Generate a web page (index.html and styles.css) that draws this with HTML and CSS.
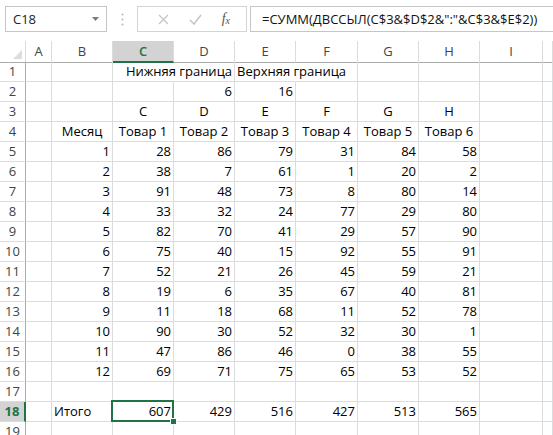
FILE: index.html
```html
<!DOCTYPE html>
<html lang="ru">
<head>
<meta charset="utf-8">
<title>Excel</title>
<link rel="stylesheet" href="styles.css">
</head>
<body>
<div class="fbar">
  <div class="namebox"><span>C18</span><svg class="dd" width="7" height="4" viewBox="0 0 7 4"><path d="M0 0H7L3.5 4Z" fill="#7a7a7a"/></svg></div>
  <div class="sep"><svg width="3" height="13" viewBox="0 0 3 13"><circle cx="1.5" cy="1.5" r="1" fill="#b5b5b5"/><circle cx="1.5" cy="6.5" r="1" fill="#b5b5b5"/><circle cx="1.5" cy="11.5" r="1" fill="#b5b5b5"/></svg></div>
  <div class="btns">
    <svg width="11" height="11" viewBox="0 0 11 11"><path d="M1 1L10 10M10 1L1 10" stroke="#c4c4c4" stroke-width="1.3" fill="none"/></svg>
    <svg width="13" height="11" viewBox="0 0 13 11"><path d="M1 6L5 10L12 1" stroke="#c4c4c4" stroke-width="1.5" fill="none"/></svg>
    <span class="fx">f<sub>x</sub></span>
  </div>
  <div class="formula">=СУММ(ДВССЫЛ(C$3&amp;$D$2&amp;":"&amp;C$3&amp;$E$2))</div>
</div>
<div class="sheet">
  <div class="row hdr"><div class="corner"><svg width="9" height="9" viewBox="0 0 9 9"><path d="M9 0V9H0Z" fill="#dcdcdc"/></svg></div><div class="ch">A</div><div class="ch">B</div><div class="ch sel">C</div><div class="ch">D</div><div class="ch">E</div><div class="ch">F</div><div class="ch">G</div><div class="ch">H</div><div class="ch">I</div><div class="ch"></div></div>
  <div class="row"><div class="rh">1</div><div class="c"></div><div class="c"></div><div class="c nob"></div><div class="c ov"><span>Нижняя граница</span></div><div class="c nob ovl"><span>Верхняя граница</span></div><div class="c"></div><div class="c"></div><div class="c"></div><div class="c"></div><div class="c"></div></div>
  <div class="row"><div class="rh">2</div><div class="c"></div><div class="c"></div><div class="c"></div><div class="c r">6</div><div class="c r">16</div><div class="c"></div><div class="c"></div><div class="c"></div><div class="c"></div><div class="c"></div></div>
  <div class="row"><div class="rh">3</div><div class="c"></div><div class="c"></div><div class="c m">C</div><div class="c m">D</div><div class="c m">E</div><div class="c m">F</div><div class="c m">G</div><div class="c m">H</div><div class="c"></div><div class="c"></div></div>
  <div class="row"><div class="rh">4</div><div class="c"></div><div class="c m">Месяц</div><div class="c m">Товар 1</div><div class="c m">Товар 2</div><div class="c m">Товар 3</div><div class="c m">Товар 4</div><div class="c m">Товар 5</div><div class="c m">Товар 6</div><div class="c"></div><div class="c"></div></div>
  <div class="row"><div class="rh">5</div><div class="c"></div><div class="c r">1</div><div class="c r">28</div><div class="c r">86</div><div class="c r">79</div><div class="c r">31</div><div class="c r">84</div><div class="c r">58</div><div class="c"></div><div class="c"></div></div>
  <div class="row"><div class="rh">6</div><div class="c"></div><div class="c r">2</div><div class="c r">38</div><div class="c r">7</div><div class="c r">61</div><div class="c r">1</div><div class="c r">20</div><div class="c r">2</div><div class="c"></div><div class="c"></div></div>
  <div class="row"><div class="rh">7</div><div class="c"></div><div class="c r">3</div><div class="c r">91</div><div class="c r">48</div><div class="c r">73</div><div class="c r">8</div><div class="c r">80</div><div class="c r">14</div><div class="c"></div><div class="c"></div></div>
  <div class="row"><div class="rh">8</div><div class="c"></div><div class="c r">4</div><div class="c r">33</div><div class="c r">32</div><div class="c r">24</div><div class="c r">77</div><div class="c r">29</div><div class="c r">80</div><div class="c"></div><div class="c"></div></div>
  <div class="row"><div class="rh">9</div><div class="c"></div><div class="c r">5</div><div class="c r">82</div><div class="c r">70</div><div class="c r">41</div><div class="c r">29</div><div class="c r">57</div><div class="c r">90</div><div class="c"></div><div class="c"></div></div>
  <div class="row"><div class="rh">10</div><div class="c"></div><div class="c r">6</div><div class="c r">75</div><div class="c r">40</div><div class="c r">15</div><div class="c r">92</div><div class="c r">55</div><div class="c r">91</div><div class="c"></div><div class="c"></div></div>
  <div class="row"><div class="rh">11</div><div class="c"></div><div class="c r">7</div><div class="c r">52</div><div class="c r">21</div><div class="c r">26</div><div class="c r">45</div><div class="c r">59</div><div class="c r">21</div><div class="c"></div><div class="c"></div></div>
  <div class="row"><div class="rh">12</div><div class="c"></div><div class="c r">8</div><div class="c r">19</div><div class="c r">6</div><div class="c r">35</div><div class="c r">67</div><div class="c r">40</div><div class="c r">81</div><div class="c"></div><div class="c"></div></div>
  <div class="row"><div class="rh">13</div><div class="c"></div><div class="c r">9</div><div class="c r">11</div><div class="c r">18</div><div class="c r">68</div><div class="c r">11</div><div class="c r">52</div><div class="c r">78</div><div class="c"></div><div class="c"></div></div>
  <div class="row"><div class="rh">14</div><div class="c"></div><div class="c r">10</div><div class="c r">90</div><div class="c r">30</div><div class="c r">52</div><div class="c r">32</div><div class="c r">30</div><div class="c r">1</div><div class="c"></div><div class="c"></div></div>
  <div class="row"><div class="rh">15</div><div class="c"></div><div class="c r">11</div><div class="c r">47</div><div class="c r">86</div><div class="c r">46</div><div class="c r">0</div><div class="c r">38</div><div class="c r">55</div><div class="c"></div><div class="c"></div></div>
  <div class="row"><div class="rh">16</div><div class="c"></div><div class="c r">12</div><div class="c r">69</div><div class="c r">71</div><div class="c r">75</div><div class="c r">65</div><div class="c r">53</div><div class="c r">52</div><div class="c"></div><div class="c"></div></div>
  <div class="row"><div class="rh">17</div><div class="c"></div><div class="c"></div><div class="c"></div><div class="c"></div><div class="c"></div><div class="c"></div><div class="c"></div><div class="c"></div><div class="c"></div><div class="c"></div></div>
  <div class="row"><div class="rh sel">18</div><div class="c"></div><div class="c l">Итого</div><div class="c r active">607<span class="handle"></span></div><div class="c r">429</div><div class="c r">516</div><div class="c r">427</div><div class="c r">513</div><div class="c r">565</div><div class="c"></div><div class="c"></div></div>
  <div class="row"><div class="rh">19</div><div class="c"></div><div class="c"></div><div class="c"></div><div class="c"></div><div class="c"></div><div class="c"></div><div class="c"></div><div class="c"></div><div class="c"></div><div class="c"></div></div>
</div>
</body>
</html>
```

FILE: styles.css
```css
html, body {
  margin: 0;
  padding: 0;
  background: #fff;
}
body {
  width: 553px;
  height: 435px;
  overflow: hidden;
  font-family: "Open Sans", "Noto Sans", sans-serif;
  font-size: 13px;
  color: #000;
}

/* formula bar */
.fbar {
  display: flex;
  height: 26px;
  padding: 6px 0 0 5px;
  margin-bottom: 9px;
}
.namebox {
  box-sizing: border-box;
  width: 102px;
  height: 26px;
  border: 1px solid #c6c6c6;
  display: flex;
  align-items: center;
  justify-content: space-between;
  padding: 0 7px 0 7px;
  color: #222;
}
.dd { margin-top: 0; }
.sep {
  width: 30px;
  display: flex;
  align-items: center;
  justify-content: center;
}
.btns {
  box-sizing: border-box;
  width: 110px;
  height: 26px;
  border: 1px solid #d4d4d4;
  display: flex;
  align-items: center;
  justify-content: space-around;
  padding: 0 6px 0 10px;
}
.fx {
  font-family: "Liberation Serif", serif;
  font-style: italic;
  font-size: 14px;
  color: #555;
}
.fx sub {
  font-size: 10px;
  vertical-align: -1px;
}
.formula {
  box-sizing: border-box;
  flex: 1;
  height: 26px;
  margin-left: 3px;
  border: 1px solid #c6c6c6;
  border-right: none;
  padding-left: 11px;
  line-height: 24px;
  white-space: nowrap;
  overflow: hidden;
  color: #111;
}

/* sheet */
.sheet {
  display: flex;
  flex-direction: column;
}
.row {
  display: grid;
  grid-template-columns: 26px 26px 61px 61px 61px 61px 62px 61px 61px 63px 1fr;
  height: 20px;
}
.row > div {
  box-sizing: border-box;
  border-right: 1px solid #dadcdd;
  border-bottom: 1px solid #dadcdd;
  line-height: 19px;
  white-space: nowrap;
  padding: 0 2px;
}
.row.hdr {
  height: 21px;
}
.row.hdr > div {
  line-height: 20px;
  border-bottom: 1px solid #ababab;
  border-right: 1px solid #dcdcdc;
  text-align: center;
  color: #444;
}
.corner {
  display: flex;
  align-items: flex-end;
  justify-content: flex-end;
  padding: 0 3px 3px 0 !important;
}
.ch.sel {
  background: #d3d3d3;
  color: #217346 !important;
  font-weight: 600;
  border-bottom: 2px solid #217346 !important;
}
.rh {
  text-align: center;
  color: #444;
  border-right: 1px solid #ababab !important;
  border-bottom: 1px solid #dcdcdc !important;
}
.rh.sel {
  background: #d3d3d3;
  color: #217346;
  font-weight: 700;
  border-right: 2px solid #217346 !important;
}
.r { text-align: right; }
.m { text-align: center; }
.l { text-align: left; }
.nob { border-right-color: transparent !important; }
.ov {
  display: flex;
  justify-content: flex-end;
}
.ovl {
  overflow: visible;
}
.active {
  position: relative;
}
.active::after {
  content: "";
  position: absolute;
  left: -2px;
  top: -2px;
  right: -1px;
  bottom: -1px;
  border: 2px solid #217346;
  pointer-events: none;
}
.handle {
  position: absolute;
  right: -4px;
  bottom: -4px;
  width: 5px;
  height: 5px;
  background: #217346;
  border: 1px solid #fff;
  z-index: 2;
}
```
